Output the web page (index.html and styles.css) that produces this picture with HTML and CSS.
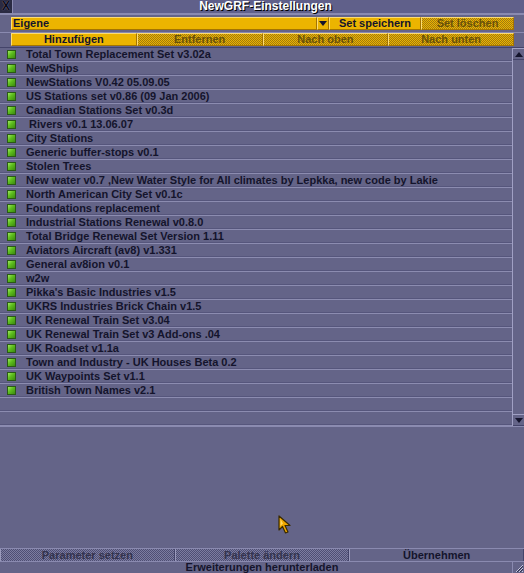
FILE: index.html
```html
<!DOCTYPE html>
<html lang="de">
<head>
<meta charset="utf-8">
<title>NewGRF-Einstellungen</title>
<link rel="stylesheet" href="styles.css">
</head>
<body>
<div class="window">
  <div class="titlebar">
    <div class="close">X</div>
    <div class="title">NewGRF-Einstellungen</div>
  </div>
  <div class="panel presets">
    <div class="ywidget dropdown">Eigene</div>
    <div class="ywidget ddarrow"><svg width="8" height="5" viewBox="0 0 8 5"><path d="M0 0h8L4 5z" fill="#14142c"/></svg></div>
    <div class="ywidget btn save">Set speichern</div>
    <div class="ywidget btn del disabled">Set löschen</div>
  </div>
  <div class="panel actions">
    <div class="ywidget btn">Hinzufügen</div>
    <div class="ywidget btn disabled">Entfernen</div>
    <div class="ywidget btn disabled">Nach oben</div>
    <div class="ywidget btn disabled">Nach unten</div>
  </div>
  <div class="listwrap">
    <ul class="list">
      <li><i class="dot"></i>Total Town Replacement Set v3.02a</li>
      <li><i class="dot"></i>NewShips</li>
      <li><i class="dot"></i>NewStations V0.42 05.09.05</li>
      <li><i class="dot"></i>US Stations set v0.86 (09 Jan 2006)</li>
      <li><i class="dot"></i>Canadian Stations Set v0.3d</li>
      <li><i class="dot"></i>&nbsp;Rivers v0.1 13.06.07</li>
      <li><i class="dot"></i>City Stations</li>
      <li><i class="dot"></i>Generic buffer-stops v0.1</li>
      <li><i class="dot"></i>Stolen Trees</li>
      <li><i class="dot"></i>New water v0.7 ,New Water Style for All climates by Lepkka, new code by Lakie</li>
      <li><i class="dot"></i>North American City Set v0.1c</li>
      <li><i class="dot"></i>Foundations replacement</li>
      <li><i class="dot"></i>Industrial Stations Renewal v0.8.0</li>
      <li><i class="dot"></i>Total Bridge Renewal Set Version 1.11</li>
      <li><i class="dot"></i>Aviators Aircraft (av8) v1.331</li>
      <li><i class="dot"></i>General av8ion v0.1</li>
      <li><i class="dot"></i>w2w</li>
      <li><i class="dot"></i>Pikka's Basic Industries v1.5</li>
      <li><i class="dot"></i>UKRS Industries Brick Chain v1.5</li>
      <li><i class="dot"></i>UK Renewal Train Set v3.04</li>
      <li><i class="dot"></i>UK Renewal Train Set v3 Add-ons .04</li>
      <li><i class="dot"></i>UK Roadset v1.1a</li>
      <li><i class="dot"></i>Town and Industry - UK Houses Beta 0.2</li>
      <li><i class="dot"></i>UK Waypoints Set v1.1</li>
      <li><i class="dot"></i>British Town Names v2.1</li>
      <li></li>
      <li></li>
    </ul>
    <div class="scrollbar">
      <div class="sbtn"><svg width="8" height="5" viewBox="0 0 8 5"><path d="M0 5h8L4 0z" fill="#14142c"/></svg></div>
      <div class="track"></div>
      <div class="sbtn"><svg width="8" height="5" viewBox="0 0 8 5"><path d="M0 0h8L4 5z" fill="#14142c"/></svg></div>
    </div>
  </div>
  <div class="panel empty"></div>
  <div class="bottombtns">
    <div class="gbtn disabled">Parameter setzen</div>
    <div class="gbtn disabled">Palette ändern</div>
    <div class="gbtn">Übernehmen</div>
  </div>
  <div class="status">
    <div class="status-text">Erweiterungen herunterladen</div>
    <div class="grip"><svg width="10" height="10" viewBox="0 0 10 10"><path d="M9 2L2 9M9 5L5 9M9 8L8 9" stroke="#c8c8e0" stroke-width="1"/><path d="M9 3L3 9M9 6L6 9" stroke="#30304c" stroke-width="1"/></svg></div>
  </div>
  <svg class="cursor" width="14" height="19" viewBox="0 0 14 19"><path d="M1 1L1 15L4.5 11.5L7.5 18L10 17L7 10.5L12 10.5Z" fill="#f0a800" stroke="#3a2a00" stroke-width="1.2" stroke-linejoin="round"/><path d="M2.5 4L2.5 11L5 8.5Z" fill="#ffd860"/></svg>
</div>
</body>
</html>
```

FILE: styles.css
```css
* { box-sizing: border-box; }
html, body { margin: 0; padding: 0; }
body {
  width: 524px;
  height: 573px;
  overflow: hidden;
  background: #646488;
  font: bold 11px "Liberation Sans", Arial, sans-serif;
  color: #14142c;
}
.window {
  position: relative;
  width: 524px;
  height: 573px;
  display: flex;
  flex-direction: column;
  background: #646488;
}
.titlebar {
  height: 14px;
  display: flex;
  background: #60608a;
  border-bottom: 1px solid #8a8ab0;
}
.close {
  width: 13px;
  background: #2a2a42;
  color: #0c0c18;
  text-shadow: 0 0 1px #9090b0;
  font-size: 12px;
  line-height: 13px;
  text-align: center;
  border-right: 1px solid #8a8ab0;
}
.title {
  flex: 1;
  text-align: center;
  color: #ffffff;
  text-shadow: 1px 1px 0 #000000;
  font-size: 12px;
  line-height: 13px;
  padding-right: 6px;
}
.panel {
  border-top: 1px solid #8a8ab0;
}
.presets {
  height: 18px;
  display: flex;
  padding: 2px 10px 2px 11px;
}
.actions {
  height: 15px;
  display: flex;
  padding: 0 10px 1px 11px;
}
.ywidget {
  background: #ecb400;
  border-top: 1px solid #fcdc74;
  border-left: 1px solid #fcdc74;
  border-right: 1px solid #a47400;
  border-bottom: 1px solid #a47400;
  line-height: 11px;
  height: 13px;
  white-space: nowrap;
}
.dropdown {
  flex: 1;
  padding-left: 1px;
}
.ddarrow {
  width: 12px;
  display: flex;
  align-items: center;
  justify-content: center;
}
.btn {
  text-align: center;
}
.save { width: 92px; }
.del { width: 93px; }
.actions .btn { flex: 1; }
.ywidget.disabled {
  background: repeating-conic-gradient(#ecb400 0 25%, #a07a10 0 50%) 0 0 / 2px 2px;
  color: #6a5208;
}
.listwrap {
  height: 379px;
  display: flex;
  border-top: 1px solid #44446a;
}
.list {
  flex: 1;
  min-width: 0;
  overflow: hidden;
  margin: 0;
  padding: 0;
  list-style: none;
}
.list li {
  height: 14px;
  display: flex;
  align-items: center;
  padding-left: 7px;
  padding-bottom: 1px;
  white-space: nowrap;
  border-bottom: 1px solid #8c8cb0;
  box-shadow: inset 0 -1px 0 #56567c;
}
.dot {
  width: 9px;
  height: 9px;
  margin-right: 10px;
  flex: none;
  background: linear-gradient(135deg, #a0e860 0%, #5cbc1c 45%, #3c8a10 100%);
  border: 1px solid #2a5a14;
}
.scrollbar {
  width: 12px;
  flex: none;
  display: flex;
  flex-direction: column;
  border-left: 1px solid #a0a0c4;
}
.sbtn {
  height: 12px;
  display: flex;
  align-items: center;
  justify-content: center;
  background: #646488;
  border-top: 1px solid #a0a0c4;
  border-bottom: 1px solid #44446a;
}
.track {
  flex: 1;
  background: #646488;
}
.empty {
  height: 122px;
}
.bottombtns {
  height: 13px;
  display: flex;
  border-top: 1px solid #8a8ab0;
}
.gbtn {
  flex: 1;
  text-align: center;
  line-height: 12px;
  border-left: 1px solid #9a9abc;
  border-right: 1px solid #44446a;
  white-space: nowrap;
}
.gbtn.disabled {
  background: repeating-conic-gradient(#7c7ca0 0 25%, #4e4e74 0 50%) 0 0 / 2px 2px;
  color: #34344e;
}
.status {
  height: 12px;
  display: flex;
  border-top: 1px solid #8a8ab0;
}
.status-text {
  flex: 1;
  text-align: center;
  line-height: 11px;
  padding-left: 12px;
}
.grip {
  width: 12px;
  display: flex;
  align-items: flex-end;
  justify-content: center;
  border-left: 1px solid #8a8ab0;
}
.cursor {
  position: absolute;
  left: 278px;
  top: 515px;
}
```
